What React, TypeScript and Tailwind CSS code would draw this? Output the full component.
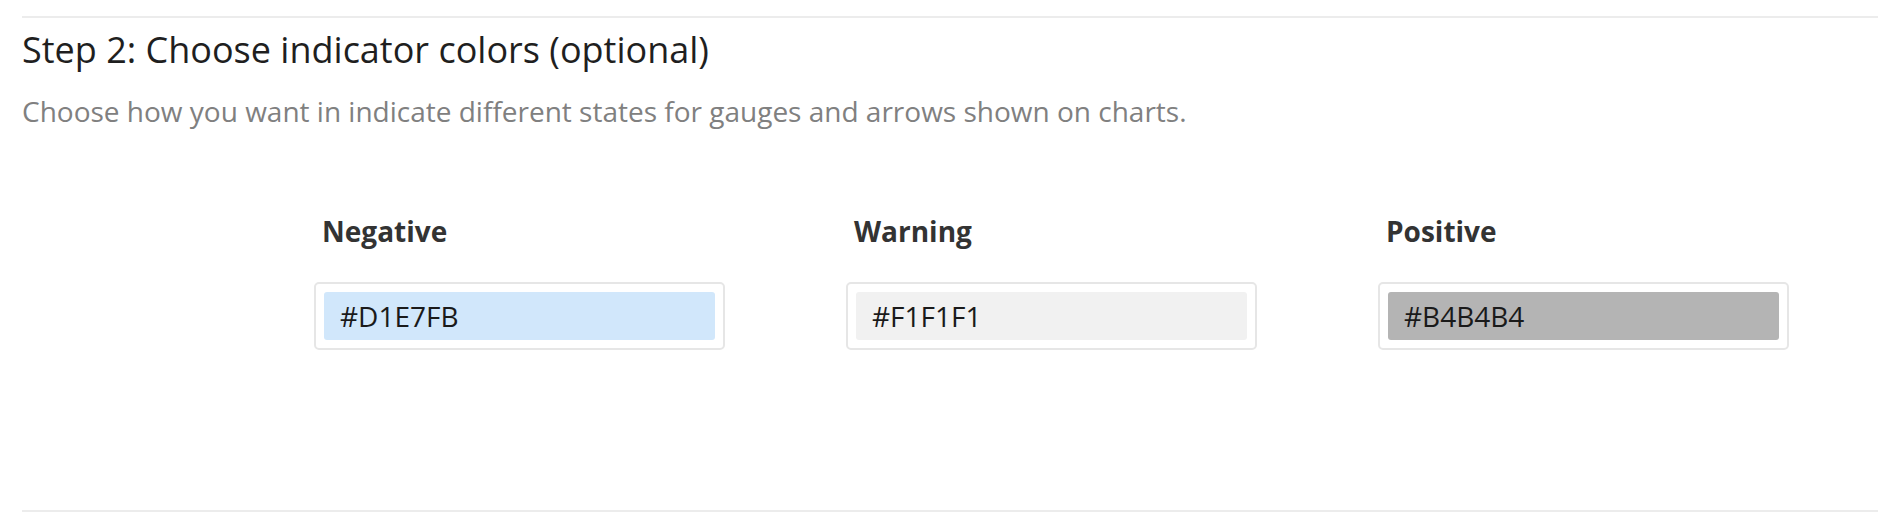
const colors = [
  { label: "Negative", value: "#D1E7FB", fill: "bg-[#d1e7fb]" },
  { label: "Warning", value: "#F1F1F1", fill: "bg-[#f1f1f1]" },
  { label: "Positive", value: "#B4B4B4", fill: "bg-[#b4b4b4]" },
];

function ColorField({ label, value, fill }: { label: string; value: string; fill: string }) {
  return (
    <div className="flex flex-col">
      <div className="pl-[8px] text-[28px] font-bold leading-[36px] text-[#333333]">{label}</div>
      <div className="mt-[33px] rounded-[5px] border-2 border-[#e6e6e6] p-[8px]">
        <div className={`flex h-[48px] items-center rounded-[3px] px-[16px] text-[28px] text-[#1a1a1a] ${fill}`}>
          {value}
        </div>
      </div>
    </div>
  );
}

export default function App() {
  return (
    <div className="h-[520px] w-full bg-white pl-[22px] pt-[16px] font-['Open_Sans',sans-serif]">
      <section className="border-y-2 border-[#ececec]">
        <h2 className="mt-[10px] text-[36px] leading-[44px] text-[#1f1f1f]">
          Step 2: Choose indicator colors (optional)
        </h2>
        <p className="mt-[21px] text-[28px] leading-[36px] text-[#808080]">
          Choose how you want in indicate different states for gauges and arrows shown on charts.
        </p>
        <div className="ml-[292px] mt-[84px] grid w-[1475px] grid-cols-3 gap-x-[121px] pb-[160px]">
          {colors.map((c) => (
            <ColorField key={c.label} {...c} />
          ))}
        </div>
      </section>
    </div>
  );
}
